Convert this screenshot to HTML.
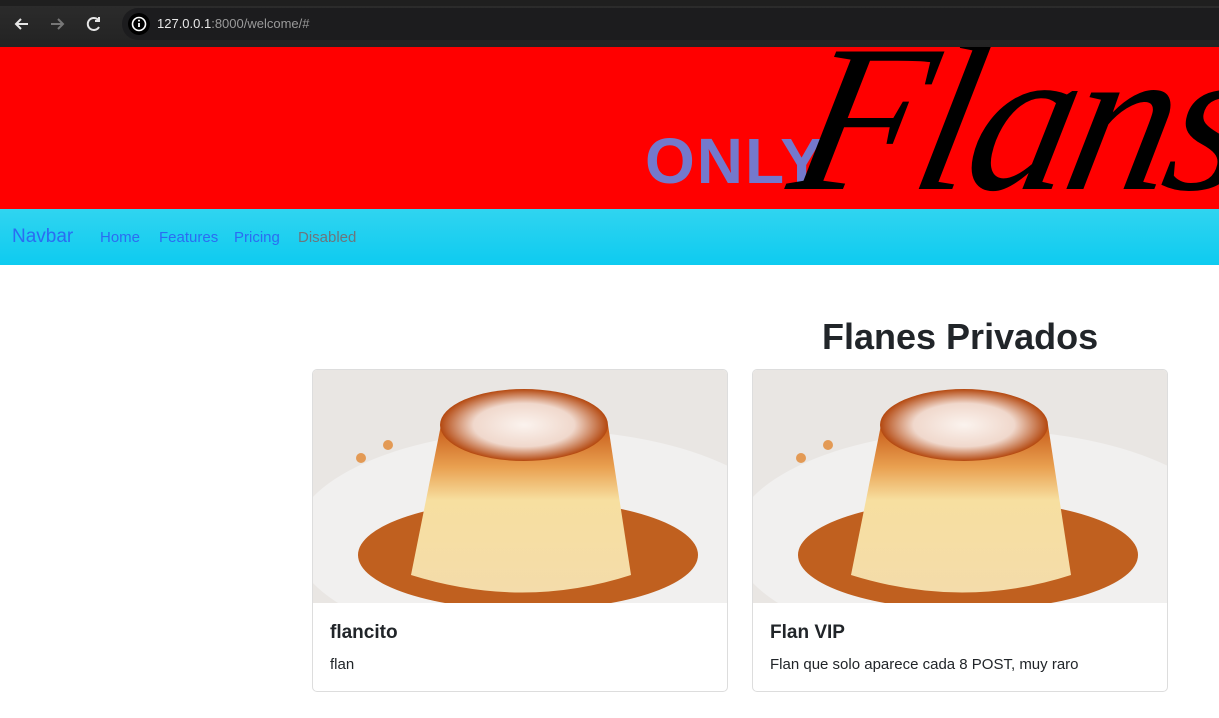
<!DOCTYPE html>
<html><head><meta charset="utf-8"><style>
*{margin:0;padding:0;box-sizing:border-box}
body{width:1219px;height:718px;overflow:hidden;background:#fff;font-family:"Segoe UI","Liberation Sans",sans-serif;position:relative}
.chrome{position:absolute;left:0;top:0;width:1219px;height:47px;background:linear-gradient(#1f1f1f 0,#1f1f1f 6px,#2b2b2b 6px,#232323 47px)}
.url{position:absolute;left:122px;top:8px;width:1097px;height:32px;border-radius:16px 0 0 16px;background:#1c1c1e}
.url .i{position:absolute;left:6px;top:5px;width:22px;height:22px;border-radius:50%;background:#000}
.url span{position:absolute;left:35px;top:8px;font-size:13px;color:#e8e8e8;font-family:"Liberation Sans",sans-serif}
.url span b{font-weight:normal;color:#9a9a9a}
.banner{position:absolute;left:0;top:47px;width:1219px;height:162px;background:#ff0000;overflow:hidden}
.only{position:absolute;left:645px;top:77px;font:bold 64px "Liberation Sans",sans-serif;color:#7479cc;letter-spacing:2px}
.flans{position:absolute;left:800px;top:-48px;font:italic 210px "Liberation Serif",serif;color:#000;letter-spacing:-6px;transform:skewX(-12deg)}
.nav{position:absolute;left:0;top:209px;width:1219px;height:56px;background:linear-gradient(#30d4f0,#0ecbf0)}
.nav a{position:absolute;top:20px;font-size:15px;color:#2b6cf2;text-decoration:none}
.nav .brand{left:12px;top:17px;font-size:19px}
h1{position:absolute;left:822px;top:316px;font-size:36px;font-weight:600;color:#212529}
.card{position:absolute;top:369px;width:416px;height:323px;border:1px solid #ddd;border-radius:5px;overflow:hidden}
.card svg{display:block}
.card h5{position:absolute;left:17px;top:252px;font-size:19px;font-weight:600;color:#212529}
.card p{position:absolute;left:17px;top:286px;font-size:15px;color:#212529}
</style></head><body>
<div class="chrome">
<svg width="110" height="47" style="position:absolute;left:0;top:0" fill="none" stroke-width="2">
<path d="M28 24H16M21 19l-5 5 5 5" stroke="#e6e6e6"/>
<path d="M51 24h12M58 19l5 5-5 5" stroke="#777"/>
<path d="M99 21a6 6 0 1 0 0 6M99 17v4h-4" stroke="#e6e6e6"/>
</svg>
<div class="url"><div class="i"><svg width="22" height="22"><circle cx="11" cy="11" r="6.5" fill="none" stroke="#fff" stroke-width="1.6"/><path d="M11 10v4" stroke="#fff" stroke-width="1.8"/><circle cx="11" cy="7.6" r="1" fill="#fff"/></svg></div><span>127.0.0.1<b>:8000/welcome/#</b></span></div>
</div>
<div class="banner"><div class="only">ONLY</div><div class="flans">Flans</div></div>
<div class="nav"><a class="brand">Navbar</a><a style="left:100px">Home</a><a style="left:159px">Features</a><a style="left:234px">Pricing</a><a style="left:298px;color:#6c757d">Disabled</a></div>
<h1>Flanes Privados</h1>
<div class="card" style="left:312px">
<svg width="416" height="233" viewBox="0 0 416 233"><defs>
<linearGradient id="b" x1="0" y1="0" x2="0" y2="1"><stop offset="0" stop-color="#c75a18"/><stop offset=".25" stop-color="#e9a050"/><stop offset=".45" stop-color="#f7dfa0"/><stop offset="1" stop-color="#f4dcaa"/></linearGradient>
<radialGradient id="t"><stop offset="0" stop-color="#fbf3ee"/><stop offset=".6" stop-color="#f0d8cc"/><stop offset="1" stop-color="#b4480f"/></radialGradient>
</defs>
<rect width="416" height="233" fill="#e9e6e3"/>
<ellipse cx="230" cy="170" rx="250" ry="110" fill="#f1f0ef"/>
<ellipse cx="215" cy="185" rx="170" ry="55" fill="#c0601f"/>
<path d="M128 55 L98 205 Q210 240 318 205 L295 55 Z" fill="url(#b)"/>
<ellipse cx="211" cy="55" rx="84" ry="36" fill="url(#t)"/>
<circle cx="75" cy="75" r="5" fill="#e39a55"/><circle cx="48" cy="88" r="5" fill="#e39a55"/>
</svg>
<h5>flancito</h5><p>flan</p></div>
<div class="card" style="left:752px">
<svg width="416" height="233" viewBox="0 0 416 233">
<rect width="416" height="233" fill="#e9e6e3"/>
<ellipse cx="230" cy="170" rx="250" ry="110" fill="#f1f0ef"/>
<ellipse cx="215" cy="185" rx="170" ry="55" fill="#c0601f"/>
<path d="M128 55 L98 205 Q210 240 318 205 L295 55 Z" fill="url(#b)"/>
<ellipse cx="211" cy="55" rx="84" ry="36" fill="url(#t)"/>
<circle cx="75" cy="75" r="5" fill="#e39a55"/><circle cx="48" cy="88" r="5" fill="#e39a55"/>
</svg>
<h5>Flan VIP</h5><p>Flan que solo aparece cada 8 POST, muy raro</p></div>
</body></html>
